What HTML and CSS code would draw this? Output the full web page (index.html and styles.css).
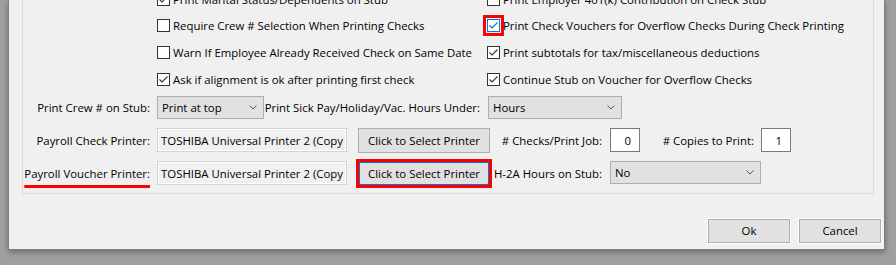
FILE: index.html
```html
<!DOCTYPE html>
<html lang="en">
<head>
  <meta charset="UTF-8" />
  <title>Check Printing Options</title>
  <link rel="stylesheet" href="styles.css">
</head>
<body>

  <div class="dialog">
    <div class="group">

      <!-- Check box options, two columns -->
      <div class="checks">
        <label class="check"><span class="box on"><svg viewBox="0 0 11 11"><path d="M1.5 5.5 L4 8 L9.5 2.5"/></svg></span>Print Marital Status/Dependents on Stub</label>
        <label class="check"><span class="box"></span>Print Employer 401(k) Contribution on Check Stub</label>
        <label class="check"><span class="box"></span>Require Crew # Selection When Printing Checks</label>
        <label class="check"><span class="box on hot"><svg viewBox="0 0 11 11"><path d="M1.5 5.5 L4 8 L9.5 2.5"/></svg></span>Print Check Vouchers for Overflow Checks During Check Printing</label>
        <label class="check"><span class="box"></span>Warn If Employee Already Received Check on Same Date</label>
        <label class="check"><span class="box on"><svg viewBox="0 0 11 11"><path d="M1.5 5.5 L4 8 L9.5 2.5"/></svg></span>Print subtotals for tax/miscellaneous deductions</label>
        <label class="check"><span class="box on"><svg viewBox="0 0 11 11"><path d="M1.5 5.5 L4 8 L9.5 2.5"/></svg></span>Ask if alignment is ok after printing first check</label>
        <label class="check"><span class="box on"><svg viewBox="0 0 11 11"><path d="M1.5 5.5 L4 8 L9.5 2.5"/></svg></span>Continue Stub on Voucher for Overflow Checks</label>
      </div>

      <div class="row row-crew">
        <span class="lbl">Print Crew # on Stub:</span>
        <div class="combo combo-crew">Print at top<svg viewBox="0 0 8 5"><path d="M0.5 0.5 L4 4 L7.5 0.5"/></svg></div>
        <span class="lbl lbl-sick">Print Sick Pay/Holiday/Vac. Hours Under:</span>
        <div class="combo combo-hours">Hours<svg viewBox="0 0 8 5"><path d="M0.5 0.5 L4 4 L7.5 0.5"/></svg></div>
      </div>

      <div class="row row-printer">
        <span class="lbl">Payroll Check Printer:</span>
        <div class="field">TOSHIBA Universal Printer 2 (Copy</div>
        <button class="btn btn-select">Click to Select Printer</button>
        <span class="lbl lbl-mid">#&nbsp;Checks/Print Job:</span>
        <div class="num">0</div>
        <span class="lbl lbl-copies">#&nbsp;Copies to Print:</span>
        <div class="num">1</div>
      </div>

      <div class="row row-voucher">
        <span class="lbl"><span class="marked">Payroll Voucher Printer:</span></span>
        <div class="field">TOSHIBA Universal Printer 2 (Copy</div>
        <button class="btn btn-select focused">Click to Select Printer</button>
        <span class="lbl lbl-mid">H-2A Hours on Stub:</span>
        <div class="combo combo-h2a">No<svg viewBox="0 0 8 5"><path d="M0.5 0.5 L4 4 L7.5 0.5"/></svg></div>
      </div>

    </div>

    <div class="actions">
      <button class="btn btn-dlg">Ok</button>
      <button class="btn btn-dlg">Cancel</button>
    </div>
  </div>

</body>
</html>
```

FILE: styles.css
```css
body {
  margin: 0;
  height: 265px;
  overflow: hidden;
  background: #a0a0a0;
  font-family: "Open Sans", "Noto Sans", sans-serif;
  font-size: 11.4px;
  color: black;
}

.dialog {
  margin-left: 8px;
  width: 875px;
  height: 249px;
  overflow: hidden;
  background: #f0f0f0;
  border: 1px solid #7f7f7f;
  border-top: none;
  box-shadow: 0 2px 6px rgba(0, 0, 0, 0.35);
}

.group {
  margin: -30px 0 0 13px;
  width: 850px;
  padding: 15px 0 7px 0;
  border: 1px solid #dcdcdc;
}

/* check boxes */
.checks {
  display: grid;
  grid-template-columns: 330px 1fr;
  grid-auto-rows: 26.67px;
  padding-left: 134px;
}

.check {
  display: flex;
  align-items: center;
  gap: 3px;
  white-space: nowrap;
}

.box {
  width: 11px;
  height: 11px;
  border: 1px solid #333;
  background: white;
  flex: none;
  display: flex;
}

.box svg {
  width: 11px;
  height: 11px;
}

.box path {
  fill: none;
  stroke: #333;
  stroke-width: 1.1;
}

.box.hot {
  border-color: #0078d7;
  outline: 3px solid red;
  outline-offset: 1px;
}

.box.hot path {
  stroke: #0078d7;
}

/* control rows */
.row {
  display: flex;
  align-items: center;
  white-space: nowrap;
}

.lbl {
  width: 127px;
  margin-right: 7px;
  text-align: right;
  flex: none;
}

.row-crew {
  margin-top: 3.3px;
  height: 24px;
}

.row-printer {
  margin-top: 8px;
  height: 25px;
}

.row-voucher {
  margin-top: 8px;
  height: 25px;
}

.lbl-sick {
  width: 216px;
  margin-right: 8px;
}

.lbl-mid {
  width: 112px;
  margin-right: 8px;
}

.lbl-copies {
  width: 114px;
}

.marked {
  text-decoration: underline red 3px;
  text-underline-offset: 7px;
  text-decoration-skip-ink: none;
}

.combo {
  height: 21px;
  box-sizing: border-box;
  display: flex;
  align-items: center;
  justify-content: space-between;
  padding: 0 6px 0 4px;
  background: #e1e1e1;
  border: 1px solid #adadad;
  flex: none;
}

.combo svg {
  width: 8px;
  height: 5px;
}

.combo path {
  fill: none;
  stroke: #555;
  stroke-width: 1;
}

.combo-crew {
  width: 107px;
  height: 23px;
}

.combo-hours {
  width: 134px;
  height: 23px;
}

.combo-h2a {
  width: 151px;
  height: 23px;
  margin-top: -2px;
}

.field {
  width: 190px;
  height: 24px;
  box-sizing: border-box;
  padding-left: 3px;
  display: flex;
  align-items: center;
  border: 1px solid #d4d4d4;
  box-shadow: inset 0 0 0 1px white;
  background: #f0f0f0;
  flex: none;
  margin-right: 11px;
}

.num {
  width: 30px;
  height: 24px;
  box-sizing: border-box;
  display: flex;
  align-items: center;
  justify-content: flex-end;
  padding-right: 8px;
  background: white;
  border: 1px solid #7a7a7a;
  flex: none;
}

.btn {
  font-family: inherit;
  font-size: 11.4px;
  color: black;
  background: #e1e1e1;
  border: 1px solid #adadad;
  padding: 0;
  margin: 0;
}

.btn-select {
  width: 132px;
  height: 25px;
  flex: none;
}

.btn-select.focused {
  border-color: #0078d7;
  box-shadow: inset 0 0 0 1px #0078d7;
  outline: 3px solid red;
  outline-offset: -1px;
}

.actions {
  display: flex;
  justify-content: flex-end;
  gap: 9px;
  margin-top: 25px;
  padding-right: 3px;
}

.btn-dlg {
  width: 82px;
  height: 24px;
  box-shadow: 0 0 0 1px white;
}
```
